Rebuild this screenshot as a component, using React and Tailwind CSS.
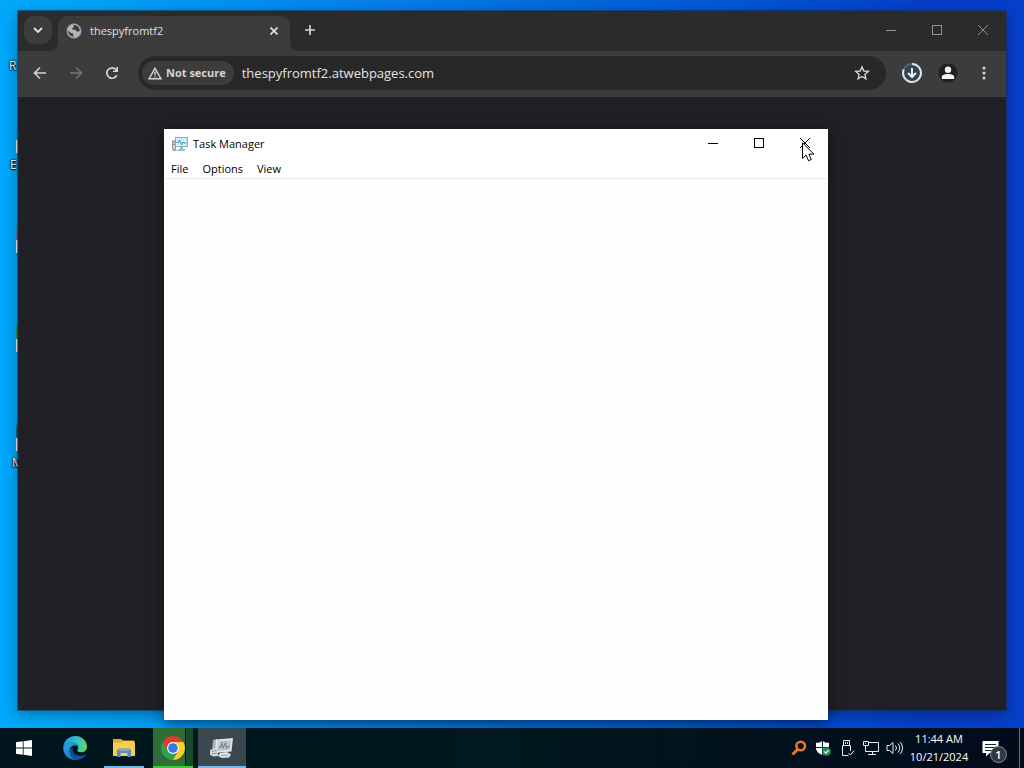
import React from 'react';

const desktopItems = [
  { label: 'R', name: 'desktop item 1', top: 'top-[58px]', left: 'left-[9px]', marker: false, tint: '' },
  { label: 'E', name: 'desktop item 2', top: 'top-[140px]', left: 'left-[10px]', marker: true, tint: '' },
  { label: '', name: 'desktop item 3', top: 'top-[240px]', left: 'left-[10px]', marker: true, tint: 'bg-[#4d82bc]' },
  { label: '', name: 'desktop item 4', top: 'top-[339px]', left: 'left-[10px]', marker: true, tint: 'bg-[#1f9a5c]' },
  { label: 'M', name: 'desktop item 5', top: 'top-[438px]', left: 'left-[12px]', marker: true, tint: 'bg-[#14698f]' },
];

function DesktopItem({ item }) {
  return (
    <button
      type="button"
      aria-label={item.name}
      className={`absolute ${item.top} ${item.left} flex flex-col items-start text-xs leading-4 text-white [text-shadow:0_1px_1px_#000,0_0_2px_#000,0_0_2px_#000]`}
    >
      {item.marker && (
        <span className="relative block h-[17px] w-3">
          <span className={`absolute -top-[18px] block h-[18px] w-3 rounded-tl-lg ${item.label === 'M' ? 'left-1' : 'left-1.5'} ${item.tint}`} />
          <span className={`absolute top-0 block h-[13px] w-3 bg-[#e6f0fa] ${item.label === 'M' ? 'left-1' : 'left-1.5'}`} />
        </span>
      )}
      {item.label}
    </button>
  );
}

function CaptionButtons({ color }) {
  return (
    <div className={`flex ${color}`}>
      <button type="button" aria-label="Minimize" className="flex h-7 w-[46px] items-center justify-center">
        <svg width="10" height="10" viewBox="0 0 10 10" stroke="currentColor" shapeRendering="crispEdges"><path d="M0 5.5h10" /></svg>
      </button>
      <button type="button" aria-label="Maximize" className="flex h-7 w-[46px] items-center justify-center">
        <svg width="10" height="10" viewBox="0 0 10 10" fill="none" stroke="currentColor" shapeRendering="crispEdges"><path d="M.5.5h9v9h-9z" /></svg>
      </button>
      <button type="button" aria-label="Close" className="flex h-7 w-[46px] items-center justify-center">
        <svg width="10" height="10" viewBox="0 0 10 10" fill="none" stroke="currentColor"><path d="M0 0l10 10M10 0L0 10" /></svg>
      </button>
    </div>
  );
}

function TabStrip() {
  return (
    <div className="flex h-10 shrink-0 items-end bg-[#2b2b2b]">
      <button type="button" aria-label="Search tabs" className="mb-[7px] ml-1.5 flex size-7 items-center justify-center rounded-[10px] bg-[#3c3c3c] text-[#e3e3e3]">
        <svg width="10" height="6" viewBox="0 0 10 6" fill="none" stroke="currentColor" strokeWidth="1.8"><path d="M1 1l4 4 4-4" /></svg>
      </button>
      <div className="relative ml-1.5 flex h-[35px] w-[232px] items-center rounded-t-[10px] bg-[#3c3c3c] px-2 pb-1.5 text-[#e0e0e0]">
        <svg className="absolute bottom-0 -left-2" width="8" height="8" viewBox="0 0 8 8"><path d="M8 0v8H0a8 8 0 0 0 8-8z" fill="#3c3c3c" /></svg>
        <svg className="absolute -right-2 bottom-0" width="8" height="8" viewBox="0 0 8 8"><path d="M0 0v8h8a8 8 0 0 1-8-8z" fill="#3c3c3c" /></svg>
        <svg width="16" height="16" viewBox="0 0 16 16">
          <circle cx="8" cy="8" r="7.2" fill="#b3b7ba" />
          <path d="M2.2 7.6l3.1 2.6h1.8v2.2l1.5 1.4C4.9 14 2 11.4 2.2 7.6zM7.4 2.4l1.8-.4c2.5.6 4.4 2.8 4.6 5.5l-1.2 1.3-2.2-.5-1-1.6H7L6 5.3l1.600-.8z" fill="#3c3c3c" />
          <circle cx="8" cy="8" r="6.8" fill="none" stroke="#9da1a4" strokeWidth="1.2" />
        </svg>
        <span className="ml-2 flex-1 truncate text-[11px] leading-4">thespyfromtf2</span>
        <button type="button" aria-label="Close tab" className="flex size-4 items-center justify-center">
          <svg width="8" height="8" viewBox="0 0 8 8" stroke="currentColor" strokeWidth="1.7"><path d="M.5.5l7 7M7.5.5l-7 7" /></svg>
        </button>
      </div>
      <button type="button" aria-label="New tab" className="mb-[7px] ml-1.5 flex size-7 items-center justify-center text-[#d8d8d8]">
        <svg width="10" height="10" viewBox="0 0 10 10" stroke="currentColor" strokeWidth="1.6"><path d="M5 0v10M0 5h10" /></svg>
      </button>
      <div className="ml-auto self-start pt-[5px]">
        <CaptionButtons color="text-[#929292]" />
      </div>
    </div>
  );
}

function Toolbar() {
  return (
    <div className="flex h-[46px] shrink-0 items-center bg-[#3c3c3c] px-1 pb-0.5 text-[#d5d5d5]">
      <button type="button" aria-label="Back" className="flex size-9 items-center justify-center">
        <svg width="14" height="14" viewBox="0 0 14 14" fill="none" stroke="currentColor" strokeWidth="1.6"><path d="M13 7H1.8M7 1.5L1.5 7 7 12.5" /></svg>
      </button>
      <button type="button" aria-label="Forward" className="flex size-9 items-center justify-center text-[#757575]">
        <svg width="14" height="14" viewBox="0 0 14 14" fill="none" stroke="currentColor" strokeWidth="1.6"><path d="M1 7h11.2M7 1.5L12.5 7 7 12.5" /></svg>
      </button>
      <button type="button" aria-label="Reload" className="flex size-9 items-center justify-center">
        <svg width="14" height="14" viewBox="0 0 14 14"><path d="M11.8 9.2A5.2 5.2 0 1 1 10.8 3.4L12 4.6" fill="none" stroke="currentColor" strokeWidth="1.7" /><path d="M13 1v5H8V4.4h3.3V1z" fill="currentColor" /></svg>
      </button>
      <div className="ml-2 flex h-[34px] min-w-0 flex-1 items-center rounded-full bg-[#282828] pr-3 pl-1">
        <button type="button" className="flex h-6 items-center gap-1 rounded-full bg-[#3c3c3c] pr-2 pl-1.5 text-[11px] leading-4 font-bold whitespace-nowrap">
          <svg width="14" height="13" viewBox="0 0 14 13"><path d="M7 1.3L13 11.8H1z" fill="none" stroke="currentColor" strokeWidth="1.4" /><path d="M6.3 4.8h1.4v3.5H6.3zM6.3 9.2h1.4v1.4H6.3z" fill="currentColor" /></svg>
          Not secure
        </button>
        <input
          type="text"
          aria-label="Address"
          defaultValue="thespyfromtf2.atwebpages.com"
          className="ml-2 min-w-0 flex-1 bg-transparent text-[13px] leading-5 text-[#e3e3e3] outline-none"
        />
        <button type="button" aria-label="Bookmark" className="flex size-6 items-center justify-center">
          <svg width="16" height="16" viewBox="0 0 16 16" fill="none" stroke="currentColor" strokeWidth="1.4"><path d="M8 1.9l1.8 4.1 4.5.4-3.4 3 1 4.4L8 11.5l-3.9 2.3 1-4.4-3.4-3 4.5-.4z" /></svg>
        </button>
      </div>
      <button type="button" aria-label="Downloads" className="ml-2 flex size-9 items-center justify-center">
        <svg width="22" height="22" viewBox="0 0 22 22" fill="none">
          <circle cx="11" cy="11" r="9" fill="#34434d" stroke="#566570" strokeWidth="2" />
          <path d="M11 2a9 9 0 1 1-8.3 5.500" stroke="#d5e7f2" strokeWidth="2" />
          <path d="M11 6v9M7 11l4 4 4-4" stroke="#e8f3fa" strokeWidth="2" />
        </svg>
      </button>
      <button type="button" aria-label="Profile" className="flex size-9 items-center justify-center">
        <svg width="20" height="20" viewBox="0 0 20 20"><circle cx="10" cy="10" r="9.5" fill="#202020" /><circle cx="10" cy="6.800" r="3.200" fill="#f5f5f5" /><path d="M3.800 16v-1.600c0-2.200 2.600-3.400 6.200-3.400s6.200 1.200 6.200 3.400V16z" fill="#f5f5f5" /></svg>
      </button>
      <button type="button" aria-label="Menu" className="flex size-9 items-center justify-center">
        <svg width="4" height="16" viewBox="0 0 4 16" fill="currentColor"><circle cx="2" cy="3" r="1.5" /><circle cx="2" cy="8" r="1.5" /><circle cx="2" cy="13" r="1.5" /></svg>
      </button>
    </div>
  );
}

function BrowserWindow() {
  return (
    <section className="absolute inset-x-[18px] top-[11px] bottom-[18px] flex flex-col bg-[#202024] shadow-[0_0_0_1px_rgba(20,50,70,0.6),0_4px_14px_rgba(0,0,0,0.35)]">
      <TabStrip />
      <Toolbar />
      <main className="flex-1 bg-[#202026]" />
    </section>
  );
}

function TaskManagerWindow() {
  return (
    <section className="absolute top-[129px] right-[196px] bottom-2 left-[164px] flex flex-col bg-white text-black shadow-[0_3px_14px_rgba(0,0,0,0.5)]">
      <header className="flex h-[30px] items-start justify-between pl-2">
        <div className="flex h-full items-center gap-[5px]">
          <svg width="16" height="16" viewBox="0 0 16 16">
            <path d="M.5 4.500h3v9h-3z" fill="#c9d3d7" stroke="#93a5ab" />
            <path d="M3.500 1.500h12v9h-12z" fill="#d6eef5" stroke="#82adb9" />
            <path d="M4.500 6.500h2l1-2.500 2 5 1.500-3 1 1h2.500" fill="none" stroke="#3193b4" />
            <path d="M8 11h3v2h2v2H6v-2h2z" fill="#a5bcc3" />
            <path d="M1 6.500h2M1 8.500h2M1 14.500h4" stroke="#8a9ca2" />
          </svg>
          <h1 className="text-[11px] leading-4">Task Manager</h1>
        </div>
        <CaptionButtons color="text-black" />
      </header>
      <nav className="flex h-5 shrink-0 items-center gap-3.5 border-b border-[#ececec] pl-[7px] text-[11px] leading-4">
        <button type="button">File</button>
        <button type="button">Options</button>
        <button type="button">View</button>
      </nav>
      <div className="flex-1 bg-[#fefefe]" />
    </section>
  );
}

function Taskbar() {
  return (
    <footer className="flex h-10 shrink-0 items-center justify-between bg-linear-to-r from-[#00161c] via-[#011820] to-[#020b1a] text-white">
      <div className="flex h-full gap-px">
        <button type="button" aria-label="Start" className="mr-0.5 flex w-12 items-center justify-center">
          <svg width="16" height="16" viewBox="0 0 16 16" fill="#fff"><path d="M0 2.3l6.8-1v6.3H0zM7.6 1.2L16 0v7.600H7.6zM0 8.4h6.8v6.3l-6.8-1zM7.6 8.4H16V16l-8.4-1.2z" /></svg>
        </button>
        <button type="button" aria-label="Edge" className="flex w-12 items-center justify-center">
          <svg width="24" height="24" viewBox="0 0 24 24">
            <defs>
              <linearGradient id="edgeTop" x1="0" y1=".4" x2="1" y2=".5"><stop offset="0" stopColor="#229ddd" /><stop offset=".55" stopColor="#2dc1c9" /><stop offset="1" stopColor="#68d660" /></linearGradient>
              <linearGradient id="edgeSide" x1="0" y1="0" x2=".6" y2="1"><stop offset="0" stopColor="#2ca9df" /><stop offset="1" stopColor="#1574c8" /></linearGradient>
            </defs>
            <path d="M.2 11.400C.7 5 5.800 0 12.200 0 19 0 24 5 24 10.700c0 3.500-2.700 5.500-5.700 5.500-2.400 0-4-.8-4-1.700 0-.6.900-1 .9-2.700 0-2.700-2.700-5-6.500-5C4.800 6.800 1.600 8.600.2 11.400z" fill="url(#edgeTop)" />
            <path d="M.2 11.400C1.600 8.600 4.800 6.800 8.700 6.800c2.800 0 5 1.300 6 3-5-1.500-8 1.300-8 5 0 4.400 3.300 8 7.300 9C6.500 25 0 19.300.2 11.400z" fill="url(#edgeSide)" />
            <path d="M9.700 11.600c-1.200 5 3.300 8.700 8.300 8.200 1.800-.2 3.200-.9 4.400-1.300.5-.2.800.2.5.6C20.900 22 17.700 24 14 24c-4.500 0-8-4.500-7.300-9.200.3-1.500 1.400-2.700 3-3.200z" fill="#124e98" />
          </svg>
        </button>
        <button type="button" aria-label="File Explorer" className="relative flex w-12 items-center justify-center">
          <svg width="22" height="20" viewBox="0 0 22 20">
            <path d="M0 1h8l2 1.500h11.500V18H0z" fill="#e8a928" /><path d="M9 3h12v3H9z" fill="#f6cd54" /><path d="M0 4.500h22V18H0z" fill="#f7cd50" />
            <path d="M4 19v-7l2-1.500h10l2 1.500v7h-3.500v-4h-7v4z" fill="#5c88bd" /><path d="M6 11h10v2H6z" fill="#86a9d0" />
          </svg>
          <span className="absolute inset-x-1 bottom-0 h-0.5 bg-[#76b9ed]" />
        </button>
        <button type="button" aria-label="Chrome" className="relative flex w-12 items-center justify-center">
          <span className="absolute inset-y-0 right-3 left-1 bg-[#2e6d36]" />
          <span className="absolute inset-y-0 right-1 w-[7px] bg-[#164b2b]" />
          <svg className="relative" width="24" height="24" viewBox="0 0 24 24">
            <path d="M1.610 6A12 12 0 0 0 12 24L17.200 15 12 12 6.800 15z" fill="#2ca24c" />
            <path d="M22.390 6A12 12 0 0 1 12 24L17.200 15 12 6z" fill="#fccd2d" />
            <path d="M1.610 6L6.800 15 9 9.500 12 6h10.390A12 12 0 0 0 1.610 6z" fill="#e33b2e" />
            <circle cx="12" cy="12" r="6" fill="#fff" /><circle cx="12" cy="12" r="4.800" fill="#3578e5" />
          </svg>
          <span className="absolute inset-x-1 bottom-0 h-0.5 bg-[#35cf35]" />
        </button>
        <button type="button" aria-label="Task Manager" className="relative flex w-12 items-center justify-center bg-[#39474e]">
          <svg width="24" height="24" viewBox="0 0 24 24">
            <path d="M3 4l4-1v12l-5 1z" fill="#aab3b6" />
            <path d="M6 3.500l17-1.500-1.500 13.500L5 17z" fill="#dde2e4" />
            <path d="M8 5.500l13-1-1 9L7.500 15z" fill="#bcc6ca" />
            <path d="M8.500 12l2-1 1.500-4 1 5 2.500-5 1 5 3-2" fill="none" stroke="#7b898f" strokeWidth="1.200" />
            <path d="M0 14l6-2 2 2v6l-5 .5-3-2z" fill="#d4dadc" />
            <path d="M10 17l7-1 4 2.500-2 3-7 .5-4-2z" fill="#dfe4e6" />
            <path d="M1.500 15.500l5-1M2 17.500h5M11 19.500l7-.5" stroke="#8c999e" />
          </svg>
          <span className="absolute inset-x-0 bottom-0 h-0.5 bg-[#76b9ed]" />
        </button>
      </div>
      <div className="flex h-full items-center">
        <button type="button" aria-label="Search utility" className="flex w-6 justify-center">
          <svg width="16" height="16" viewBox="0 0 16 16" fill="none"><circle cx="9.700" cy="6" r="4.300" stroke="#ee7425" strokeWidth="2.600" /><path d="M6.800 9.200L1.500 14.500" stroke="#ee7425" strokeWidth="3" /></svg>
        </button>
        <button type="button" aria-label="Security" className="flex w-6 justify-center">
          <svg width="16" height="16" viewBox="0 0 16 16"><path d="M7.500 1C5.500 2.300 3.500 2.800 1 2.800V8c0 3.300 2.800 5.800 6.500 7 3.700-1.200 6.500-3.700 6.500-7V2.800C11.500 2.800 9.500 2.300 7.500 1z" fill="#fff" /><path d="M7.500 1v14M1 7.500h13" stroke="#071725" /><circle cx="11.500" cy="11.500" r="4.300" fill="#229657" /><path d="M9.300 11.500l1.600 1.600 2.800-3" fill="none" stroke="#fff" strokeWidth="1.200" /></svg>
        </button>
        <button type="button" aria-label="Safely remove hardware" className="flex w-6 justify-center">
          <svg width="16" height="18" viewBox="0 0 16 18" fill="none" stroke="#e8edf0"><path d="M4.500 1.500h6v5h-6zM3.500 6.500h8V12M3.500 6.500v10h6M9.500 14l2 2 3.500-4.500M6.500 3v2M8.500 3v2" /></svg>
        </button>
        <button type="button" aria-label="Network" className="flex w-6 justify-center">
          <svg width="18" height="16" viewBox="0 0 18 16" fill="none" stroke="#e8edf0"><path d="M6.500 2.500h10v9h-11M10.500 11.500v3M6 14.500h8M1.500 1.500h5v4h-5zM3.500 5.500v6H6M3.500 3v1" /></svg>
        </button>
        <button type="button" aria-label="Volume" className="flex w-6 justify-center">
          <svg width="18" height="16" viewBox="0 0 18 16" fill="none" stroke="#e8edf0"><path d="M1 5.500h2.500L7 2.500v11L3.500 10.500H1zM9.500 5.500q2 2.500 0 5M12 3.500q3.500 4.500 0 9M14.300 2q4.500 6 0 12" /></svg>
        </button>
        <button type="button" className="w-16 text-center text-[11px] leading-[18px] whitespace-nowrap">
          <span className="block">11:44 AM</span>
          <span className="block">10/21/2024</span>
        </button>
        <button type="button" aria-label="Notifications" className="relative flex h-full w-12 items-center pl-[11px]">
          <svg width="17" height="17" viewBox="0 0 17 17"><path d="M.5 1h16v12H7.500L4 16.500V13H.5z" fill="#fff" /><path d="M3 4.500h11M3 7.500h11M3 10.500h7" stroke="#14232d" /></svg>
          <span className="absolute top-[18px] left-[19px] flex size-[17px] items-center justify-center rounded-full border border-[#858e96] bg-[#30383f] text-[11px] leading-3 font-semibold">1</span>
        </button>
        <button type="button" aria-label="Show desktop" className="h-full w-[5px] border-l border-[#65707a]" />
      </div>
    </footer>
  );
}

export default function App() {
  return (
    <div className="flex h-screen flex-col overflow-hidden font-['Open_Sans','Noto_Sans',sans-serif]">
      <div className="relative min-h-0 flex-1 overflow-hidden bg-linear-to-r from-[#00a8fb] from-5% via-[#087be9] via-40% to-[#063fc9] to-90%">
        {desktopItems.map((item) => <DesktopItem key={item.name} item={item} />)}
        <BrowserWindow />
        <TaskManagerWindow />
        <svg className="pointer-events-none absolute top-[142px] left-[802px]" width="13" height="20" viewBox="0 0 13 20">
          <path d="M.5.8v15.7l3.600-3.400 2.400 5.600 2.800-1.200-2.400-5.400h5z" fill="#fff" stroke="#000" />
        </svg>
      </div>
      <Taskbar />
    </div>
  );
}
